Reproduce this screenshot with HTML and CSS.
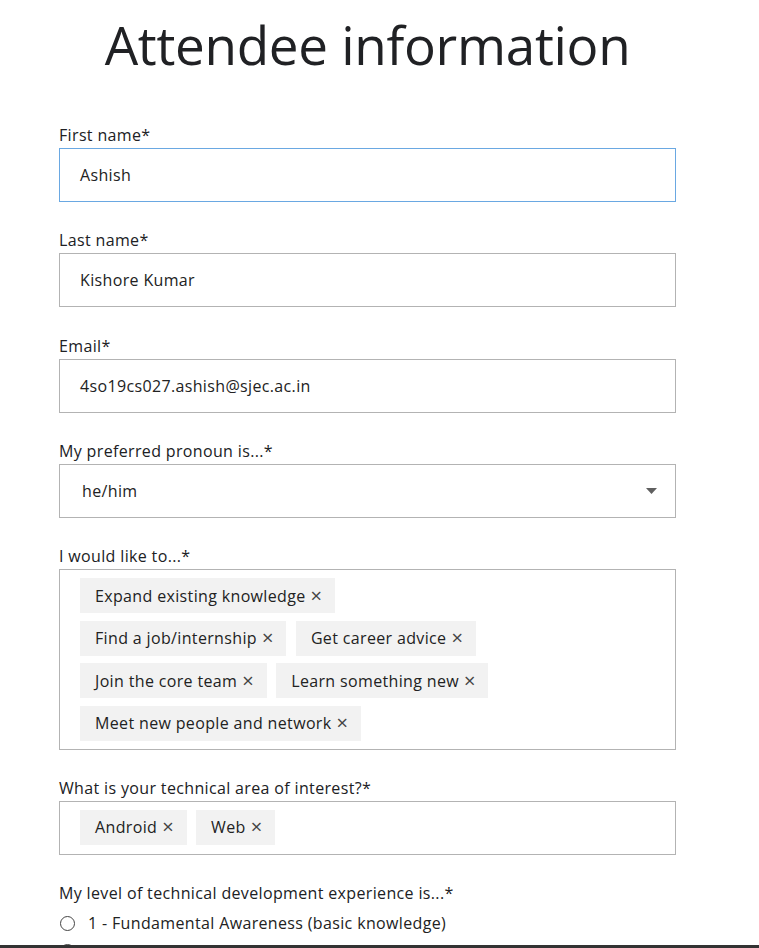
FILE: index.html
```html
<!DOCTYPE html>
<html lang="en">
<head>
<meta charset="utf-8">
<title>Attendee information</title>
<link rel="stylesheet" href="styles.css">
</head>
<body>
<main class="page">
  <h1 class="title">Attendee information</h1>
  <form class="form">
    <div class="field">
      <label class="label">First name*</label>
      <div class="input input-focus">Ashish</div>
    </div>
    <div class="field">
      <label class="label">Last name*</label>
      <div class="input">Kishore Kumar</div>
    </div>
    <div class="field">
      <label class="label">Email*</label>
      <div class="input">4so19cs027.ashish@sjec.ac.in</div>
    </div>
    <div class="field">
      <label class="label">My preferred pronoun is...*</label>
      <div class="input select">
        <span class="select-value">he/him</span>
        <svg class="select-arrow" width="11" height="6" viewBox="0 0 11 6"><path d="M0 0H11L5.5 6Z" fill="#5f5f5f"/></svg>
      </div>
    </div>
    <div class="field">
      <label class="label">I would like to...*</label>
      <div class="chipbox">
        <div class="chips chips-narrow">
          <span class="chip">Expand existing knowledge<span class="x">×</span></span>
          <span class="chip">Find a job/internship<span class="x">×</span></span>
          <span class="chip">Get career advice<span class="x">×</span></span>
          <span class="chip">Join the core team<span class="x">×</span></span>
          <span class="chip">Learn something new<span class="x">×</span></span>
          <span class="chip">Meet new people and network<span class="x">×</span></span>
        </div>
      </div>
    </div>
    <div class="field">
      <label class="label">What is your technical area of interest?*</label>
      <div class="chipbox">
        <div class="chips">
          <span class="chip">Android<span class="x">×</span></span>
          <span class="chip">Web<span class="x">×</span></span>
        </div>
      </div>
    </div>
    <div class="field">
      <label class="label">My level of technical development experience is...*</label>
      <div class="radios">
        <div class="radio"><span class="circle"></span>1 - Fundamental Awareness (basic knowledge)</div>
        <div class="radio"><span class="circle"></span>2 - Novice (limited experience)</div>
        <div class="radio"><span class="circle"></span>3 - Intermediate (practical application)</div>
      </div>
    </div>
  </form>
</main>
<div class="bottom-bar"></div>
</body>
</html>
```

FILE: styles.css
```css
* { box-sizing: border-box; }
html, body { margin: 0; padding: 0; background: #fff; }
body {
  font-family: "Open Sans", "Noto Sans", sans-serif;
  font-size: 16px;
  letter-spacing: 0.35px;
  color: #202124;
}
.page {
  width: 617px;
  margin-left: 59px;
  padding-top: 13px;
}
.title {
  margin: 0 0 48px 0;
  font-size: 53px;
  line-height: 64px;
  font-weight: 400;
  text-align: center;
  color: #202124;
  letter-spacing: -0.3px;
}
.form { display: flex; flex-direction: column; }
.field { margin-bottom: 28.3px; display: flex; flex-direction: column; }
.label {
  display: block;
  line-height: 20px;
  margin-bottom: 3px;
  color: #202124;
}
.input {
  height: 54px;
  border: 1px solid #b3b3b3;
  padding: 0 20px;
  display: flex;
  align-items: center;
  color: #222;
}
.input-focus { border-color: #6aa8e2; }
.select { padding-left: 22px; justify-content: space-between; padding-right: 18px; }
.select-arrow { display: block; }
.chipbox {
  min-height: 54px;
  border: 1px solid #b3b3b3;
  padding: 8px 20px;
}
.chips {
  display: flex;
  flex-wrap: wrap;
  row-gap: 7.5px;
  column-gap: 9.5px;
}
.chips-narrow { max-width: 450px; }
.chip {
  display: inline-flex;
  align-items: center;
  height: 35px;
  padding: 0 13px 0 15px;
  background: #f2f2f2;
  color: #222;
  white-space: nowrap;
}
.x {
  color: #444;
  font-size: 20px;
  line-height: 20px;
  margin-left: 5px;
  letter-spacing: 0;
}
.radios { margin-top: 3px; display: flex; flex-direction: column; }
.radio {
  display: flex;
  align-items: center;
  line-height: 28px;
  color: #222;
}
.circle {
  width: 15px;
  height: 15px;
  border: 1.5px solid #444;
  border-radius: 50%;
  margin-left: 1px;
  margin-right: 13px;
}
.bottom-bar {
  position: fixed;
  left: 0;
  right: 0;
  bottom: 0;
  height: 3px;
  background: #333;
}
```
